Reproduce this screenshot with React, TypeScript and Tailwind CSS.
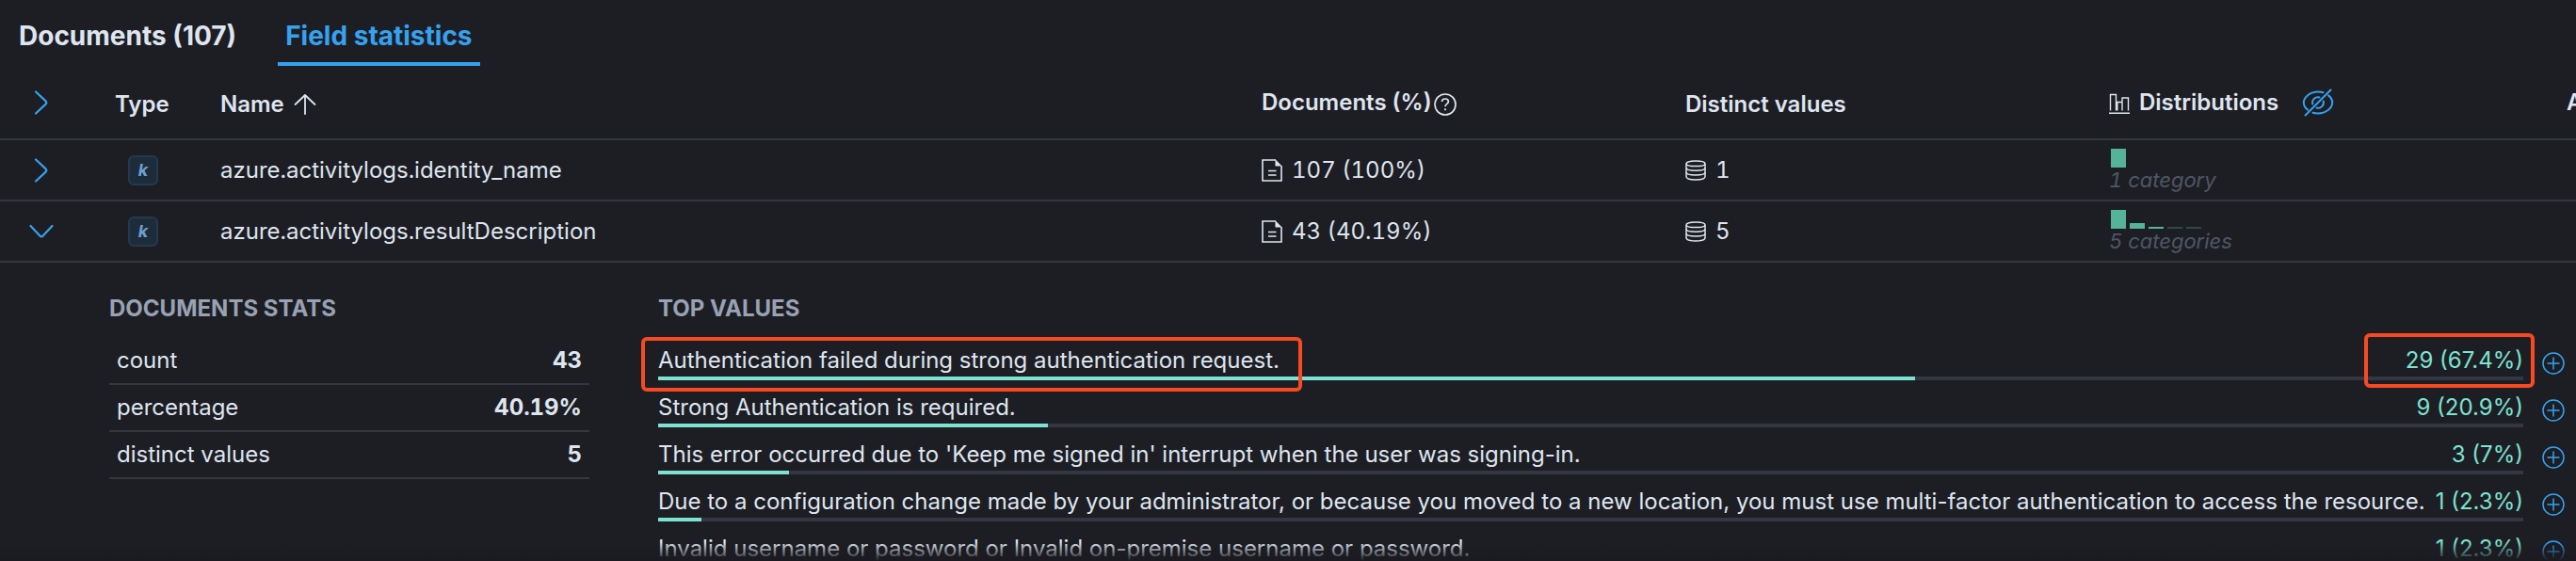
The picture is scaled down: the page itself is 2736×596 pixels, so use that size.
import React from "react";

type DistBar = { h: number; dim?: boolean };

const TEXT = "text-2xl leading-[36px]";
const VALUE_TEXT = "text-2xl leading-[34px]";

function ChevronRight() {
  return (
    <svg width="28" height="28" viewBox="0 0 28 28" fill="none" stroke="#36a2ef" strokeWidth="2.2" strokeLinecap="round" strokeLinejoin="round" aria-hidden="true">
      <path d="M8 2.500 L18.600 12.400 Q20 14 18.600 15.600 L8 25.500" />
    </svg>
  );
}

function ChevronDown() {
  return (
    <svg width="28" height="28" viewBox="0 0 28 28" fill="none" stroke="#36a2ef" strokeWidth="2.2" strokeLinecap="round" strokeLinejoin="round" aria-hidden="true">
      <path d="M2.500 8 L12.400 18.600 Q14 20 15.600 18.600 L25.500 8" />
    </svg>
  );
}

function ArrowUp() {
  return (
    <svg width="24" height="24" viewBox="0 0 24 24" fill="none" stroke="#dfe5ef" strokeWidth="1.8" strokeLinecap="round" strokeLinejoin="round" aria-hidden="true">
      <path d="M12 22V2M1.500 12 L12 2 L22.500 12" />
    </svg>
  );
}

function HelpIcon() {
  return (
    <svg width="24" height="24" viewBox="0 0 24 24" fill="none" stroke="#dfe5ef" strokeWidth="1.7" className="mt-1" aria-hidden="true">
      <circle cx="12" cy="12" r="11" />
      <path d="M8.500 9 C8.500 7 10 6 12 6 S15.400 7.200 15.400 9 C15.400 11.400 12 11.400 12 14.200" />
      <circle cx="12" cy="17.300" r="1.100" fill="#dfe5ef" stroke="none" />
    </svg>
  );
}

function DocumentIcon() {
  return (
    <svg width="22" height="24" viewBox="0 0 22 24" fill="none" stroke="#dfe5ef" strokeWidth="1.6" aria-hidden="true">
      <path d="M15 1H1V23H21V7" />
      <path d="M14.500 0.300V7.500H21.700Z" fill="#dfe5ef" stroke="none" />
      <path d="M7 12.500H15.500M7 17H15.500" />
    </svg>
  );
}

function DatabaseIcon() {
  return (
    <svg width="22" height="22" viewBox="0 0 22 22" fill="none" stroke="#dfe5ef" strokeWidth="1.5" aria-hidden="true">
      <path d="M1 4C1 2.200 5 1 11 1S21 2.200 21 4S17 6.600 11 6.600S1 5.800 1 4Z" />
      <path d="M1 4V17.500C1 19.800 5 21 11 21S21 19.800 21 17.500V4" />
      <path d="M1 8.600C1 10.400 5 11.300 11 11.300S21 10.400 21 8.600M1 13.300C1 15.100 5 16 11 16S21 15.100 21 13.300" />
    </svg>
  );
}

function HistogramIcon() {
  return (
    <svg width="22" height="22" viewBox="0 0 22 22" fill="none" stroke="#dfe5ef" strokeWidth="1.4" className="mt-0.5" aria-hidden="true">
      <path d="M0 21.200H22M1.500 18.500V1.500H7.500V18.500M7.500 9.500H14M8.800 18.500V9.500M14 18.500V5H20.500V18.500" />
    </svg>
  );
}

function EyeClosed() {
  return (
    <svg width="36" height="30" viewBox="0 0 36 30" fill="none" stroke="#36a2ef" strokeWidth="2" strokeLinecap="round" aria-hidden="true">
      <path d="M23.500 4.200C21.800 3.700 20 3.500 18 3.500C10 3.500 2.800 9 2.800 15C2.800 18 4.400 20.600 7 22.600" />
      <path d="M12.500 25.800C14.200 26.300 16 26.500 18 26.500C26 26.500 33.200 21 33.200 15C33.200 12 31.600 9.400 29 7.400" />
      <path d="M4.500 28.500 L31.500 1.500" />
      <path d="M12.300 16.500A5.800 5.800 0 0 1 19.500 9.400M23.700 13.500A5.800 5.800 0 0 1 16.500 20.600" />
    </svg>
  );
}

function PlusCircle() {
  return (
    <svg width="24" height="24" viewBox="0 0 24 24" fill="none" stroke="#36a2ef" strokeWidth="1.5" aria-hidden="true">
      <circle cx="12" cy="12" r="11" />
      <path d="M12 5.500V18.500M5.500 12H18.500" />
    </svg>
  );
}

function Keyword() {
  return (
    <span className="flex h-8 w-8 items-center justify-center rounded-md border-2 border-[#23394d] bg-[#1d2c3b] text-lg leading-none font-bold text-[#6f9fce] italic">
      k
    </span>
  );
}

const fields: { name: string; docs: string; distinct: number; label: string; open: boolean; bars: DistBar[] }[] = [
  { name: "azure.activitylogs.identity_name", docs: "107 (100%)", distinct: 1, label: "1 category", open: false, bars: [{ h: 20 }] },
  {
    name: "azure.activitylogs.resultDescription",
    docs: "43 (40.19%)",
    distinct: 5,
    label: "5 categories",
    open: true,
    bars: [{ h: 20 }, { h: 6 }, { h: 2 }, { h: 2, dim: true }, { h: 2, dim: true }],
  },
];

const stats = [
  ["count", "43"],
  ["percentage", "40.19%"],
  ["distinct values", "5"],
];

const topValues = [
  { text: "Authentication failed during strong authentication request.", value: "29 (67.4%)", pct: 67.4, marked: true },
  { text: "Strong Authentication is required.", value: "9 (20.9%)", pct: 20.9 },
  { text: "This error occurred due to 'Keep me signed in' interrupt when the user was signing-in.", value: "3 (7%)", pct: 7 },
  {
    text: "Due to a configuration change made by your administrator, or because you moved to a new location, you must use multi-factor authentication to access the resource.",
    value: "1 (2.3%)",
    pct: 2.3,
  },
  { text: "Invalid username or password or Invalid on-premise username or password.", value: "1 (2.3%)", pct: 2.3 },
];

function Details() {
  return (
    <div className="flex pt-[31px] pr-3 pl-[116px]">
      <section className="w-[510px] shrink-0">
        <h3 className={`${TEXT} font-bold text-[#98a2b3]`}>DOCUMENTS STATS</h3>
        <table className="mt-3 w-full">
          <tbody>
            {stats.map(([label, value]) => (
              <tr key={label} className="h-[50px] border-b-2 border-[#343741]">
                <th scope="row" className={`${TEXT} px-2 text-left font-normal`}>{label}</th>
                <td className={`${TEXT} px-2 text-right font-bold tabular-nums`}>{value}</td>
              </tr>
            ))}
          </tbody>
        </table>
      </section>
      <section className="ml-[73px] min-w-0 flex-1">
        <h3 className={`${TEXT} font-bold text-[#98a2b3]`}>TOP VALUES</h3>
        <ul className="mt-3.5">
          {topValues.map((item) => (
            <li key={item.text} className="flex h-[50px] items-start gap-5">
              <div className="min-w-0 flex-1">
                <div className="flex h-10 items-end justify-between whitespace-nowrap">
                  <span className={`${VALUE_TEXT} relative`}>
                    {item.text}
                    {item.marked && <span className="absolute -top-2 -right-6 -bottom-4 -left-[18px] z-10 rounded-md border-4 border-[#f74a23]" />}
                  </span>
                  <span className={`${VALUE_TEXT} relative text-[#7de2d1]`}>
                    {item.value}
                    {item.marked && <span className="absolute -top-3 -right-3 -bottom-3 -left-11 z-10 rounded-md border-4 border-[#f74a23]" />}
                  </span>
                </div>
                <div className="h-1 bg-[#343741]">
                  <div className="h-full bg-[#7de2d1]" style={{ width: `${item.pct}%` }} />
                </div>
              </div>
              <button type="button" aria-label="Filter for value" className="mt-3.5">
                <PlusCircle />
              </button>
            </li>
          ))}
        </ul>
      </section>
    </div>
  );
}

export default function App() {
  return (
    <main className="relative h-screen overflow-hidden bg-[#1d1e24] font-['Inter',sans-serif] text-[#dfe5ef]">
      <nav className="flex h-[70px] gap-11 pl-5" role="tablist">
        <button type="button" role="tab" aria-selected="false" className="pt-1.5 text-[28px] font-bold">Documents (107)</button>
        <button type="button" role="tab" aria-selected="true" className="border-b-4 border-[#36a2ef] px-2 pt-2.5 text-[28px] font-bold text-[#36a2ef]">
          Field statistics
        </button>
      </nav>
      <table className="w-full min-w-[2736px] table-fixed border-collapse">
        <colgroup>
          <col className="w-[108px]" />
          <col className="w-[110px]" />
          <col className="w-[1106px]" />
          <col className="w-[450px]" />
          <col className="w-[450px]" />
          <col />
          <col className="w-[24px]" />
        </colgroup>
        <thead>
          <tr className={`${TEXT} h-[78px] border-b-2 border-[#343741] text-left`}>
            <th className="pl-[30px]"><button type="button" aria-label="Expand all" className="block"><ChevronRight /></button></th>
            <th className="pt-1 pl-3.5 font-semibold">Type</th>
            <th className="pt-1 pl-4 font-semibold"><span className="flex items-center gap-2.5">Name <ArrowUp /></span></th>
            <th className="pl-4 font-semibold"><span className="flex items-center gap-0.5">Documents (%)<HelpIcon /></span></th>
            <th className="pt-1 pl-4 font-semibold">Distinct values</th>
            <th className="pl-4 font-semibold">
              <span className="flex items-center gap-2.5">
                <HistogramIcon />
                Distributions
                <button type="button" aria-label="Hide distributions" className="ml-3.5"><EyeClosed /></button>
              </span>
            </th>
            <th className="overflow-hidden pl-3.5 font-semibold whitespace-nowrap">Actions</th>
          </tr>
        </thead>
        <tbody className={`${TEXT} tabular-nums`}>
          {fields.map((f) => (
            <tr key={f.name} className="h-[65px] border-b-2 border-[#343741]">
              <td className="pl-[30px]"><button type="button" aria-label={`Toggle ${f.name}`} className="block">{f.open ? <ChevronDown /> : <ChevronRight />}</button></td>
              <td className="pl-7"><Keyword /></td>
              <td className="pl-4">{f.name}</td>
              <td className="pl-4"><span className="flex items-center gap-2.5"><DocumentIcon />{f.docs}</span></td>
              <td className="pl-4"><span className="flex items-center gap-2.5"><DatabaseIcon />{f.distinct}</span></td>
              <td className="pl-4">
                <div className="flex h-5 items-end gap-1 pl-0.5">
                  {f.bars.map((b, i) => (
                    <span key={i} className={b.dim ? "w-4 bg-[#2d4a45]" : "w-4 bg-[#54b399]"} style={{ height: b.h }} />
                  ))}
                </div>
                <div className="text-[22px] leading-[26px] text-[#4f5665] italic">{f.label}</div>
              </td>
              <td />
            </tr>
          ))}
        </tbody>
      </table>
      <Details />
      <div className="pointer-events-none absolute inset-x-0 bottom-0 h-5 bg-gradient-to-b from-transparent to-[#1a1a20]" />
    </main>
  );
}
